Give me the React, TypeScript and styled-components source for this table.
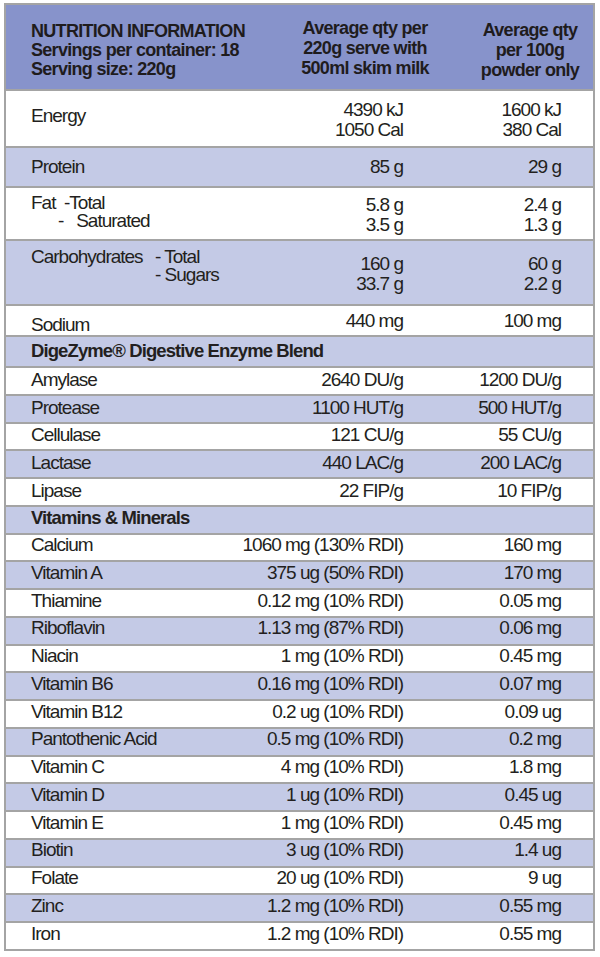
import styled, { createGlobalStyle } from "styled-components";

const GlobalStyle = createGlobalStyle`
  html, body {
    margin: 0;
    padding: 0;
    background: #ffffff;
  }
  body {
    font-family: "Liberation Sans", Arial, sans-serif;
    color: #231f20;
  }
`;

const Panel = styled.div`
  box-sizing: border-box;
  width: 591px;
  margin: 3px 0 0 4px;
  border: 2px solid #a4a4a4;
`;

const Head = styled.div`
  display: grid;
  grid-template-columns: 284px 150px 1fr;
  height: 84px;
  background: #8793cb;
  font-size: 18px;
  font-weight: bold;
  letter-spacing: -0.7px;
  color: #1f1c1d;
`;

const HeadTitle = styled.div`
  padding: 17px 0 0 25px;
  line-height: 19px;
  white-space: nowrap;
`;

const HeadCol = styled.div<{ $top: number; $left?: number }>`
  padding-top: ${(p) => p.$top}px;
  padding-left: ${(p) => p.$left ?? 0}px;
  line-height: 20px;
  text-align: center;
  white-space: nowrap;
`;

const Row = styled.div<{ $shade?: boolean; $h: number; $top?: number; $bottom?: number; $center?: boolean }>`
  box-sizing: border-box;
  display: grid;
  grid-template-columns: minmax(0, 1fr) 178px 158px;
  align-items: ${(p) => (p.$center ? "center" : "start")};
  height: ${(p) => p.$h}px;
  padding: ${(p) => p.$top ?? 0}px 32px ${(p) => p.$bottom ?? 0}px 25px;
  border-top: 2px solid #a4a4a4;
  background: ${(p) => (p.$shade ? "#c4cae6" : "#ffffff")};
  font-size: 19px;
  line-height: 20px;
  letter-spacing: -1px;
  white-space: nowrap;
`;

const Section = styled(Row)`
  grid-template-columns: 1fr;
  font-size: 18.5px;
  font-weight: bold;
  letter-spacing: -0.9px;
`;

const Label = styled.div<{ $shift?: number; $lh?: number }>`
  margin-top: ${(p) => p.$shift ?? 0}px;
  line-height: ${(p) => p.$lh ?? 20}px;
`;

const Value = styled.div<{ $shift?: number; $lh?: number }>`
  margin-top: ${(p) => p.$shift ?? 0}px;
  line-height: ${(p) => p.$lh ?? 20}px;
  text-align: right;
`;

const SubLine = styled.div<{ $indent?: number }>`
  padding-left: ${(p) => p.$indent ?? 0}px;
  white-space: pre;
`;

const SplitLabel = styled.div`
  display: grid;
  grid-template-columns: 124px auto;
  line-height: 18px;
`;

const enzymes: [string, string, string][] = [
  ["Amylase", "2640 DU/g", "1200 DU/g"],
  ["Protease", "1100 HUT/g", "500 HUT/g"],
  ["Cellulase", "121 CU/g", "55 CU/g"],
  ["Lactase", "440 LAC/g", "200 LAC/g"],
  ["Lipase", "22 FIP/g", "10 FIP/g"],
];

const vitamins: [string, string, string][] = [
  ["Calcium", "1060 mg (130% RDI)", "160 mg"],
  ["Vitamin A", "375 ug (50% RDI)", "170 mg"],
  ["Thiamine", "0.12 mg (10% RDI)", "0.05 mg"],
  ["Riboflavin", "1.13 mg (87% RDI)", "0.06 mg"],
  ["Niacin", "1 mg (10% RDI)", "0.45 mg"],
  ["Vitamin B6", "0.16 mg (10% RDI)", "0.07 mg"],
  ["Vitamin B12", "0.2 ug (10% RDI)", "0.09 ug"],
  ["Pantothenic Acid", "0.5 mg (10% RDI)", "0.2 mg"],
  ["Vitamin C", "4 mg (10% RDI)", "1.8 mg"],
  ["Vitamin D", "1 ug (10% RDI)", "0.45 ug"],
  ["Vitamin E", "1 mg (10% RDI)", "0.45 mg"],
  ["Biotin", "3 ug (10% RDI)", "1.4 ug"],
  ["Folate", "20 ug (10% RDI)", "9 ug"],
  ["Zinc", "1.2 mg (10% RDI)", "0.55 mg"],
  ["Iron", "1.2 mg (10% RDI)", "0.55 mg"],
];

export default function App() {
  return (
    <>
      <GlobalStyle />
      <Panel>
        <Head>
          <HeadTitle>
            NUTRITION INFORMATION
            <br />
            Servings per container: 18
            <br />
            Serving size: 220g
          </HeadTitle>
          <HeadCol $top={13}>
            Average qty per
            <br />
            220g serve with
            <br />
            500ml skim milk
          </HeadCol>
          <HeadCol $top={15} $left={27}>
            Average qty
            <br />
            per 100g
            <br />
            powder only
          </HeadCol>
        </Head>

        <Row $h={57} $top={9}>
          <Label $shift={6}>Energy</Label>
          <Value>
            4390 kJ
            <br />
            1050 Cal
          </Value>
          <Value>
            1600 kJ
            <br />
            380 Cal
          </Value>
        </Row>

        <Row $h={40} $top={9} $shade>
          <Label>Protein</Label>
          <Value>85 g</Value>
          <Value>29 g</Value>
        </Row>

        <Row $h={53} $top={6}>
          <Label $lh={18}>
            <SubLine>Fat  -Total</SubLine>
            <SubLine $indent={27}>-   Saturated</SubLine>
          </Label>
          <Value $shift={1}>
            5.8 g
            <br />
            3.5 g
          </Value>
          <Value $shift={1}>
            2.4 g
            <br />
            1.3 g
          </Value>
        </Row>

        <Row $h={65} $top={7} $shade>
          <SplitLabel>
            <span>Carbohydrates</span>
            <div>
              <SubLine>- Total</SubLine>
              <SubLine>- Sugars</SubLine>
            </div>
          </SplitLabel>
          <Value $shift={6} $lh={19.5}>
            160 g
            <br />
            33.7 g
          </Value>
          <Value $shift={6} $lh={19.5}>
            60 g
            <br />
            2.2 g
          </Value>
        </Row>

        <Row $h={31} $top={5}>
          <Label $shift={4}>Sodium</Label>
          <Value>440 mg</Value>
          <Value>100 mg</Value>
        </Row>

        <Section $h={31} $center $bottom={1} $shade>
          <Label>DigeZyme® Digestive Enzyme Blend</Label>
        </Section>

        {enzymes.map(([name, serve, powder], i) => (
          <Row key={name} $h={27.8} $center $bottom={2} $shade={i % 2 === 1}>
            <Label>{name}</Label>
            <Value>{serve}</Value>
            <Value>{powder}</Value>
          </Row>
        ))}

        <Section $h={27.75} $center $bottom={4} $shade>
          <Label>Vitamins &amp; Minerals</Label>
        </Section>

        {vitamins.map(([name, serve, powder], i) => (
          <Row key={name} $h={27.75} $center $bottom={5} $shade={i % 2 === 1}>
            <Label>{name}</Label>
            <Value>{serve}</Value>
            <Value>{powder}</Value>
          </Row>
        ))}
      </Panel>
    </>
  );
}
